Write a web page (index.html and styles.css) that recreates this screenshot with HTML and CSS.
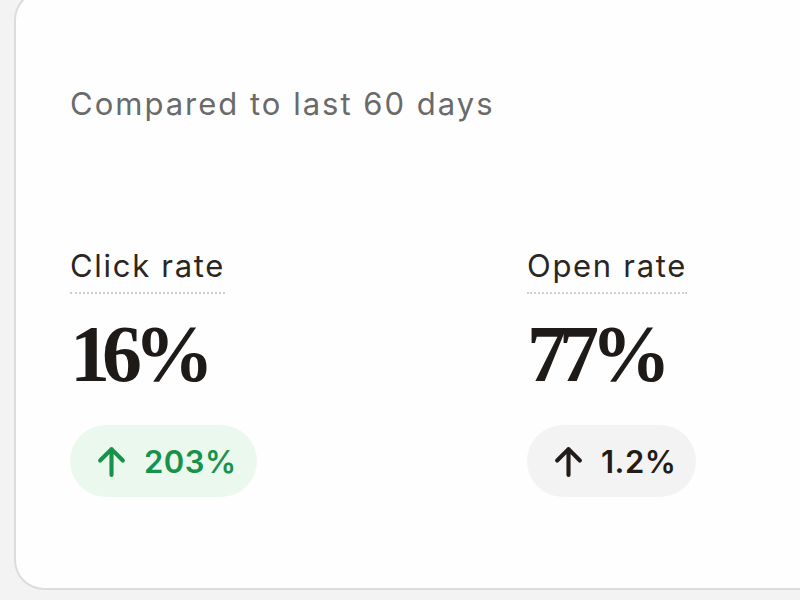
FILE: index.html
```html
<!DOCTYPE html>
<html>
<head>
<meta charset="utf-8">
<link rel="stylesheet" href="styles.css">
</head>
<body>
<div class="card">
  <p class="subtitle">Compared to last 60 days</p>
  <div class="stats">
    <div class="stat">
      <span class="label">Click rate</span>
      <div class="value">16%</div>
      <div class="pill pill-up">
        <svg class="arrow" viewBox="0 0 32 32" width="33" height="33"><path d="M16 29V4M5 15L16 4l11 11" fill="none" stroke="currentColor" stroke-width="4" stroke-linecap="round" stroke-linejoin="round"/></svg>
        <span>203%</span>
      </div>
    </div>
    <div class="stat">
      <span class="label">Open rate</span>
      <div class="value">77%</div>
      <div class="pill pill-neutral">
        <svg class="arrow" viewBox="0 0 32 32" width="33" height="33"><path d="M16 29V4M5 15L16 4l11 11" fill="none" stroke="currentColor" stroke-width="4" stroke-linecap="round" stroke-linejoin="round"/></svg>
        <span>1.2%</span>
      </div>
    </div>
  </div>
</div>
</body>
</html>
```
FILE: styles.css
```css
html, body {
  margin: 0;
  padding: 0;
  background: #f4f3f3;
  height: 600px;
  overflow: hidden;
}
.card {
  box-sizing: border-box;
  margin: -10px 0 0 14px;
  width: 786px;
  height: 600px;
  background: #fefefe;
  border: 2px solid #dcdcdc;
  border-right: none;
  border-radius: 30px 0 0 30px;
  padding: 92px 0 0 54px;
  font-family: Inter, "Liberation Sans", sans-serif;
}
.subtitle {
  margin: 0;
  font-size: 31px;
  line-height: 40px;
  letter-spacing: 2px;
  color: #6a6a6a;
}
.stats {
  display: grid;
  grid-template-columns: 457px 1fr;
  margin-top: 122px;
}
.stat {
  display: flex;
  flex-direction: column;
  align-items: flex-start;
}
.label {
  font-size: 31px;
  line-height: 40px;
  letter-spacing: 1.7px;
  color: #2a2624;
  padding-bottom: 6px;
  border-bottom: 2px dotted #cfcfcf;
}
.value {
  font-family: "Liberation Serif", serif;
  font-weight: bold;
  font-size: 80px;
  line-height: 100px;
  letter-spacing: -8px;
  color: #1e1a17;
  margin-top: 10px;
}
.pill {
  display: flex;
  align-items: center;
  gap: 16px;
  height: 72px;
  padding: 0 20px 0 25px;
  border-radius: 36px;
  margin-top: 21px;
  font-size: 31px;
  font-weight: 600;
  letter-spacing: 0.5px;
}
.pill-up {
  background: #ebf8ed;
  color: #17924a;
}
.pill-neutral {
  background: #f4f3f3;
  color: #221c18;
}
.arrow {
  display: block;
}
```
